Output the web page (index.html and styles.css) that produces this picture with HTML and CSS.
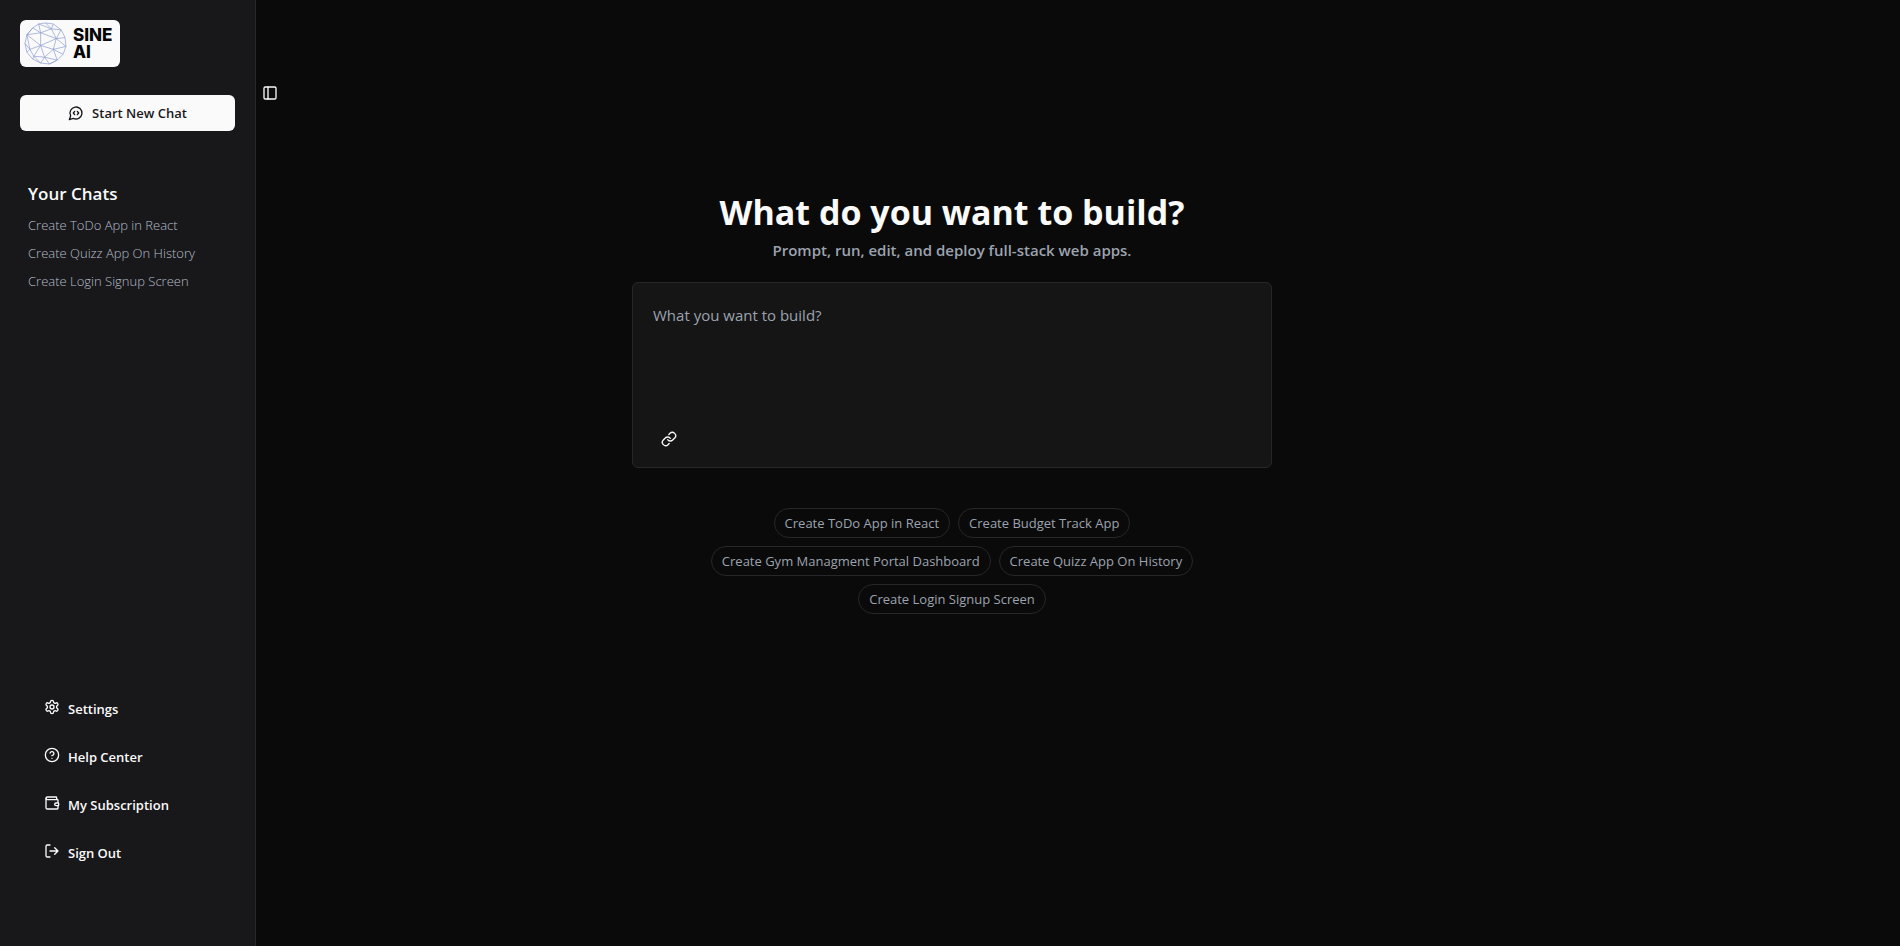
FILE: index.html
```html
<!DOCTYPE html>
<html lang="en">
<head>
<meta charset="utf-8">
<meta name="viewport" content="width=device-width, initial-scale=1">
<title>Sine AI</title>
<link rel="stylesheet" href="styles.css">
</head>
<body>
<div class="app">
  <aside class="sidebar">
    <header class="sidebar-header">
      <a class="logo" href="#" aria-label="Sine AI">
        <svg class="logo-globe" viewBox="0 0 44 44" aria-hidden="true">
          <path d="M22 1 30 2 38 8 42 16 43 25 40 33 34 39 26 43 17 42 9 38 3 31 1 22 3 13 9 6 15 2Z"/>
          <path d="M15 2 28 7 38 8 33 17 42 16 M15 2 17 11 28 7 22 1 M28 7 33 17 17 11 3 13 9 6 17 11 M28 7 30 2 M17 11 17 24 33 17 43 25 30 28 33 17 M17 24 30 28 21 36 17 24 6 28 3 13 17 24 M1 22 6 28 3 31 M6 28 10 35 17 24 M10 35 21 36 17 42 10 35 9 38 M21 36 26 43 34 39 30 28 40 33 M21 36 34 39"/>
        </svg>
        <span class="logo-name">SINE<br>AI</span>
      </a>
      <button class="new-chat" type="button">
        <svg class="icon" viewBox="0 0 24 24" aria-hidden="true"><path d="M10 9.500 8 12l2 2.500M14 9.500l2 2.500-2 2.500M7.900 20A9 9 0 1 0 4 16.100L2 22z"/></svg>
        Start New Chat
      </button>
    </header>
    <section class="chats">
      <h2 class="chats-title">Your Chats</h2>
      <ul class="chat-list">
        <li><a href="#">Create ToDo App in React</a></li>
        <li><a href="#">Create Quizz App On History</a></li>
        <li><a href="#">Create Login Signup Screen</a></li>
      </ul>
    </section>
    <nav class="sidebar-footer">
      <button type="button"><svg class="icon" viewBox="0 0 24 24" aria-hidden="true"><path d="M12.220 2h-.44a2 2 0 0 0-2 2v.18a2 2 0 0 1-1 1.730l-.43.25a2 2 0 0 1-2 0l-.15-.08a2 2 0 0 0-2.730.730l-.22.380a2 2 0 0 0 .730 2.730l.15.1a2 2 0 0 1 1 1.720v.510a2 2 0 0 1-1 1.740l-.15.090a2 2 0 0 0-.730 2.730l.22.380a2 2 0 0 0 2.730.730l.15-.080a2 2 0 0 1 2 0l.43.250a2 2 0 0 1 1 1.730V20a2 2 0 0 0 2 2h.440a2 2 0 0 0 2-2v-.180a2 2 0 0 1 1-1.730l.430-.250a2 2 0 0 1 2 0l.150.080a2 2 0 0 0 2.730-.730l.220-.390a2 2 0 0 0-.730-2.730l-.150-.080a2 2 0 0 1-1-1.740v-.500a2 2 0 0 1 1-1.740l.150-.090a2 2 0 0 0 .730-2.730l-.220-.380a2 2 0 0 0-2.730-.730l-.150.080a2 2 0 0 1-2 0l-.430-.250a2 2 0 0 1-1-1.730V4a2 2 0 0 0-2-2z"/><circle cx="12" cy="12" r="3"/></svg><span>Settings</span></button>
      <button type="button"><svg class="icon" viewBox="0 0 24 24" aria-hidden="true"><circle cx="12" cy="12" r="10"/><path d="M9.090 9a3 3 0 0 1 5.830 1c0 2-3 3-3 3M12 17h.01"/></svg><span>Help Center</span></button>
      <button type="button"><svg class="icon" viewBox="0 0 24 24" aria-hidden="true"><path d="M19 7V4a1 1 0 0 0-1-1H5a2 2 0 0 0 0 4h15a1 1 0 0 1 1 1v4h-3a2 2 0 0 0 0 4h3a1 1 0 0 0 1-1v-2a1 1 0 0 0-1-1"/><path d="M3 5v14a2 2 0 0 0 2 2h15a1 1 0 0 0 1-1v-4"/></svg><span>My Subscription</span></button>
      <button type="button"><svg class="icon" viewBox="0 0 24 24" aria-hidden="true"><path d="M9 21H5a2 2 0 0 1-2-2V5a2 2 0 0 1 2-2h4M16 17l5-5-5-5M21 12H9"/></svg><span>Sign Out</span></button>
    </nav>
  </aside>

  <main class="main">
    <button class="toggle" type="button" aria-label="Toggle sidebar">
      <svg class="icon" viewBox="0 0 24 24" aria-hidden="true"><rect x="3" y="3" width="18" height="18" rx="2"/><path d="M9 3v18"/></svg>
    </button>
    <div class="hero">
      <h1 class="hero-title">What do you want to build?</h1>
      <p class="hero-text">Prompt, run, edit, and deploy full-stack web apps.</p>
      <form class="prompt">
        <textarea class="prompt-input" aria-label="Prompt" placeholder="What you want to build?"></textarea>
        <button class="attach" type="button" aria-label="Attach link">
          <svg class="icon" viewBox="0 0 24 24" aria-hidden="true"><path d="M10 13a5 5 0 0 0 7.540.540l3-3a5 5 0 0 0-7.070-7.070l-1.720 1.710"/><path d="M14 11a5 5 0 0 0-7.540-.540l-3 3a5 5 0 0 0 7.070 7.070l1.710-1.710"/></svg>
        </button>
      </form>
      <div class="suggestions">
        <button type="button">Create ToDo App in React</button>
        <button type="button">Create Budget Track App</button>
        <button type="button">Create Gym Managment Portal Dashboard</button>
        <button type="button">Create Quizz App On History</button>
        <button type="button">Create Login Signup Screen</button>
      </div>
    </div>
  </main>
</div>
</body>
</html>
```
FILE: styles.css
```css
*,
*::before,
*::after {
  box-sizing: border-box;
}

body {
  margin: 0;
  background: #0a0a0a;
  color: #fafafa;
  font-family: "Segoe UI", "Open Sans", "Noto Sans", sans-serif;
  font-size: 13px;
  line-height: 20px;
}

h1, h2, p, ul {
  margin: 0;
  padding: 0;
}

a {
  color: inherit;
  text-decoration: none;
}

button {
  padding: 0;
  border: 0;
  background: none;
  color: inherit;
  font: inherit;
  cursor: pointer;
}

.icon {
  flex: none;
  display: block;
  width: 16px;
  height: 16px;
  fill: none;
  stroke: currentColor;
  stroke-width: 2;
  stroke-linecap: round;
  stroke-linejoin: round;
}

.app {
  display: flex;
  min-height: 100vh;
}

.sidebar {
  flex: none;
  display: flex;
  flex-direction: column;
  width: 256px;
  border-right: 1px solid #27272a;
  background: #18181b;
}

.sidebar-header {
  display: flex;
  flex-direction: column;
  align-items: flex-start;
  gap: 28px;
  padding: 20px;
}

.logo {
  display: flex;
  align-items: center;
  gap: 6px;
  width: 100px;
  height: 47px;
  padding-left: 4px;
  border-radius: 6px;
  background: #fafafa;
}

.logo-globe {
  flex: none;
  width: 43px;
  height: 43px;
  fill: none;
  stroke: #8b9ccf;
  stroke-width: 0.7;
}

.logo-name {
  color: #050505;
  font-family: Inter, sans-serif;
  font-size: 17px;
  font-weight: 800;
  line-height: 17px;
}

.new-chat {
  display: flex;
  align-items: center;
  justify-content: center;
  gap: 8px;
  width: 100%;
  height: 36px;
  border-radius: 6px;
  background: #fafafa;
  color: #18181b;
  font-weight: 600;
}

.chats {
  padding: 29px 28px 0;
}

.chats-title {
  font-size: 17px;
  font-weight: 600;
  line-height: 28px;
}

.chat-list {
  display: grid;
  gap: 8px;
  margin-top: 7px;
  color: #b4bcc8;
  font-weight: 300;
  list-style: none;
}

.chat-list a {
  display: block;
}

.sidebar-footer {
  display: grid;
  gap: 12px;
  margin-top: auto;
  padding: 0 28px 75px;
}

.sidebar-footer button {
  display: flex;
  align-items: flex-start;
  gap: 8px;
  height: 36px;
  padding: 8px 16px;
  font-weight: 600;
}

.main {
  flex: 1;
  min-width: 0;
  padding: 79px 252px 40px 0;
}

.toggle {
  display: grid;
  place-items: center;
  width: 28px;
  height: 28px;
}

.hero {
  display: flex;
  flex-direction: column;
  align-items: center;
  padding-top: 85px;
}

.hero-title {
  font-size: 34px;
  font-weight: 700;
  line-height: 40px;
}

.hero-text {
  margin-top: 6px;
  color: #9ca3af;
  font-size: 15px;
  font-weight: 600;
  line-height: 24px;
}

.prompt {
  width: 100%;
  max-width: 640px;
  margin-top: 20px;
  padding: 20px 20px 12px;
  border: 1px solid #27272a;
  border-radius: 6px;
  background: #151515;
}

.prompt-input {
  display: block;
  width: 100%;
  height: 120px;
  padding: 0;
  border: 0;
  outline: 0;
  resize: none;
  background: transparent;
  color: #fafafa;
  font-family: inherit;
  font-size: 15px;
  line-height: 24px;
}

.prompt-input::placeholder {
  color: #9ca3af;
}

.attach {
  display: grid;
  place-items: center;
  width: 32px;
  height: 32px;
}

.suggestions {
  display: flex;
  flex-wrap: wrap;
  justify-content: center;
  gap: 8px;
  max-width: 500px;
  margin-top: 40px;
}

.suggestions button {
  height: 30px;
  padding: 4px 10px;
  border: 1px solid #27272a;
  border-radius: 15px;
  color: #9ca3af;
}
```
